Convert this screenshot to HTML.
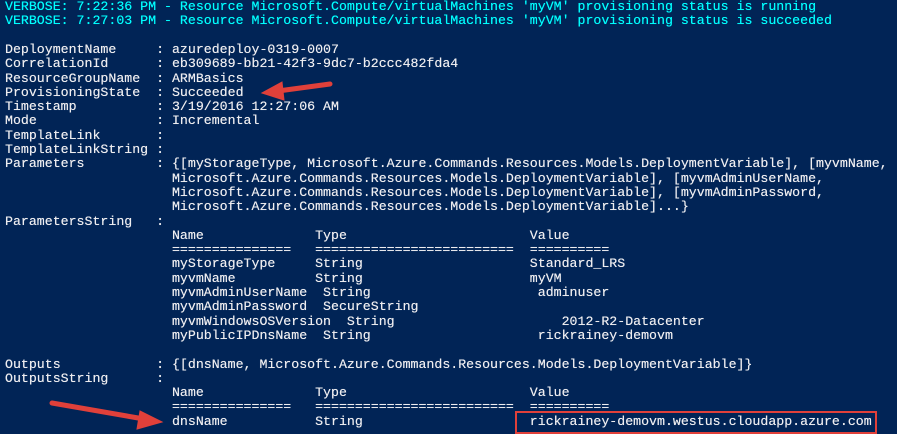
<!DOCTYPE html>
<html><head><style>
body{margin:0;width:897px;height:434px;background:#012456;overflow:hidden;position:relative;font-family:"Liberation Mono",monospace;font-size:13.25px;color:#eeedf0}
.l{position:absolute;left:5px;white-space:pre;line-height:14.3px;height:14.3px;text-shadow:0 0 0.4px #eeedf0}
.c{color:#00ffff;text-shadow:0 0 0.4px #00ffff}
</style></head><body>
<div class="l c" style="top:0">VERBOSE: 7:22:36 PM - Resource Microsoft.Compute/virtualMachines 'myVM' provisioning status is running</div>
<div class="l c" style="top:14.3px">VERBOSE: 7:27:03 PM - Resource Microsoft.Compute/virtualMachines 'myVM' provisioning status is succeeded</div>
<div class="l" style="top:42.9px">DeploymentName     : azuredeploy-0319-0007</div>
<div class="l" style="top:57.2px">CorrelationId      : eb309689-bb21-42f3-9dc7-b2ccc482fda4</div>
<div class="l" style="top:71.5px">ResourceGroupName  : ARMBasics</div>
<div class="l" style="top:85.8px">ProvisioningState  : Succeeded</div>
<div class="l" style="top:100.1px">Timestamp          : 3/19/2016 12:27:06 AM</div>
<div class="l" style="top:114.4px">Mode               : Incremental</div>
<div class="l" style="top:128.7px">TemplateLink       :</div>
<div class="l" style="top:143px">TemplateLinkString :</div>
<div class="l" style="top:157.3px">Parameters         : {[myStorageType, Microsoft.Azure.Commands.Resources.Models.DeploymentVariable], [myvmName,</div>
<div class="l" style="top:171.6px">                     Microsoft.Azure.Commands.Resources.Models.DeploymentVariable], [myvmAdminUserName,</div>
<div class="l" style="top:185.9px">                     Microsoft.Azure.Commands.Resources.Models.DeploymentVariable], [myvmAdminPassword,</div>
<div class="l" style="top:200.2px">                     Microsoft.Azure.Commands.Resources.Models.DeploymentVariable]...}</div>
<div class="l" style="top:214.5px">ParametersString   :</div>
<div class="l" style="top:228.8px">                     Name              Type                       Value</div>
<div class="l" style="top:243.1px">                     ===============   =========================  ==========</div>
<div class="l" style="top:257.4px">                     myStorageType     String                     Standard_LRS</div>
<div class="l" style="top:271.7px">                     myvmName          String                     myVM</div>
<div class="l" style="top:286px">                     myvmAdminUserName  String                     adminuser</div>
<div class="l" style="top:300.3px">                     myvmAdminPassword  SecureString</div>
<div class="l" style="top:314.6px">                     myvmWindowsOSVersion  String                     2012-R2-Datacenter</div>
<div class="l" style="top:328.9px">                     myPublicIPDnsName  String                     rickrainey-demovm</div>
<div class="l" style="top:357.5px">Outputs            : {[dnsName, Microsoft.Azure.Commands.Resources.Models.DeploymentVariable]}</div>
<div class="l" style="top:371.8px">OutputsString      :</div>
<div class="l" style="top:386.1px">                     Name              Type                       Value</div>
<div class="l" style="top:400.4px">                     ===============   =========================  ==========</div>
<div class="l" style="top:414.7px">                     dnsName           String                     rickrainey-demovm.westus.cloudapp.azure.com</div>
<div style="position:absolute;left:515px;top:411px;width:358px;height:19px;border:2px solid #e0403a"></div>
<svg width="897" height="434" style="position:absolute;left:0;top:0">
<g stroke="#e0403a" stroke-width="5" stroke-linecap="round" fill="#e0403a">
<line x1="330" y1="84" x2="278" y2="91"/>
<polygon points="262,93 282,82 284,100" stroke-width="1"/>
<line x1="52" y1="403" x2="144" y2="419"/>
<polygon points="162,422 140,411 137,429" stroke-width="1"/>
</g></svg>
</body></html>
